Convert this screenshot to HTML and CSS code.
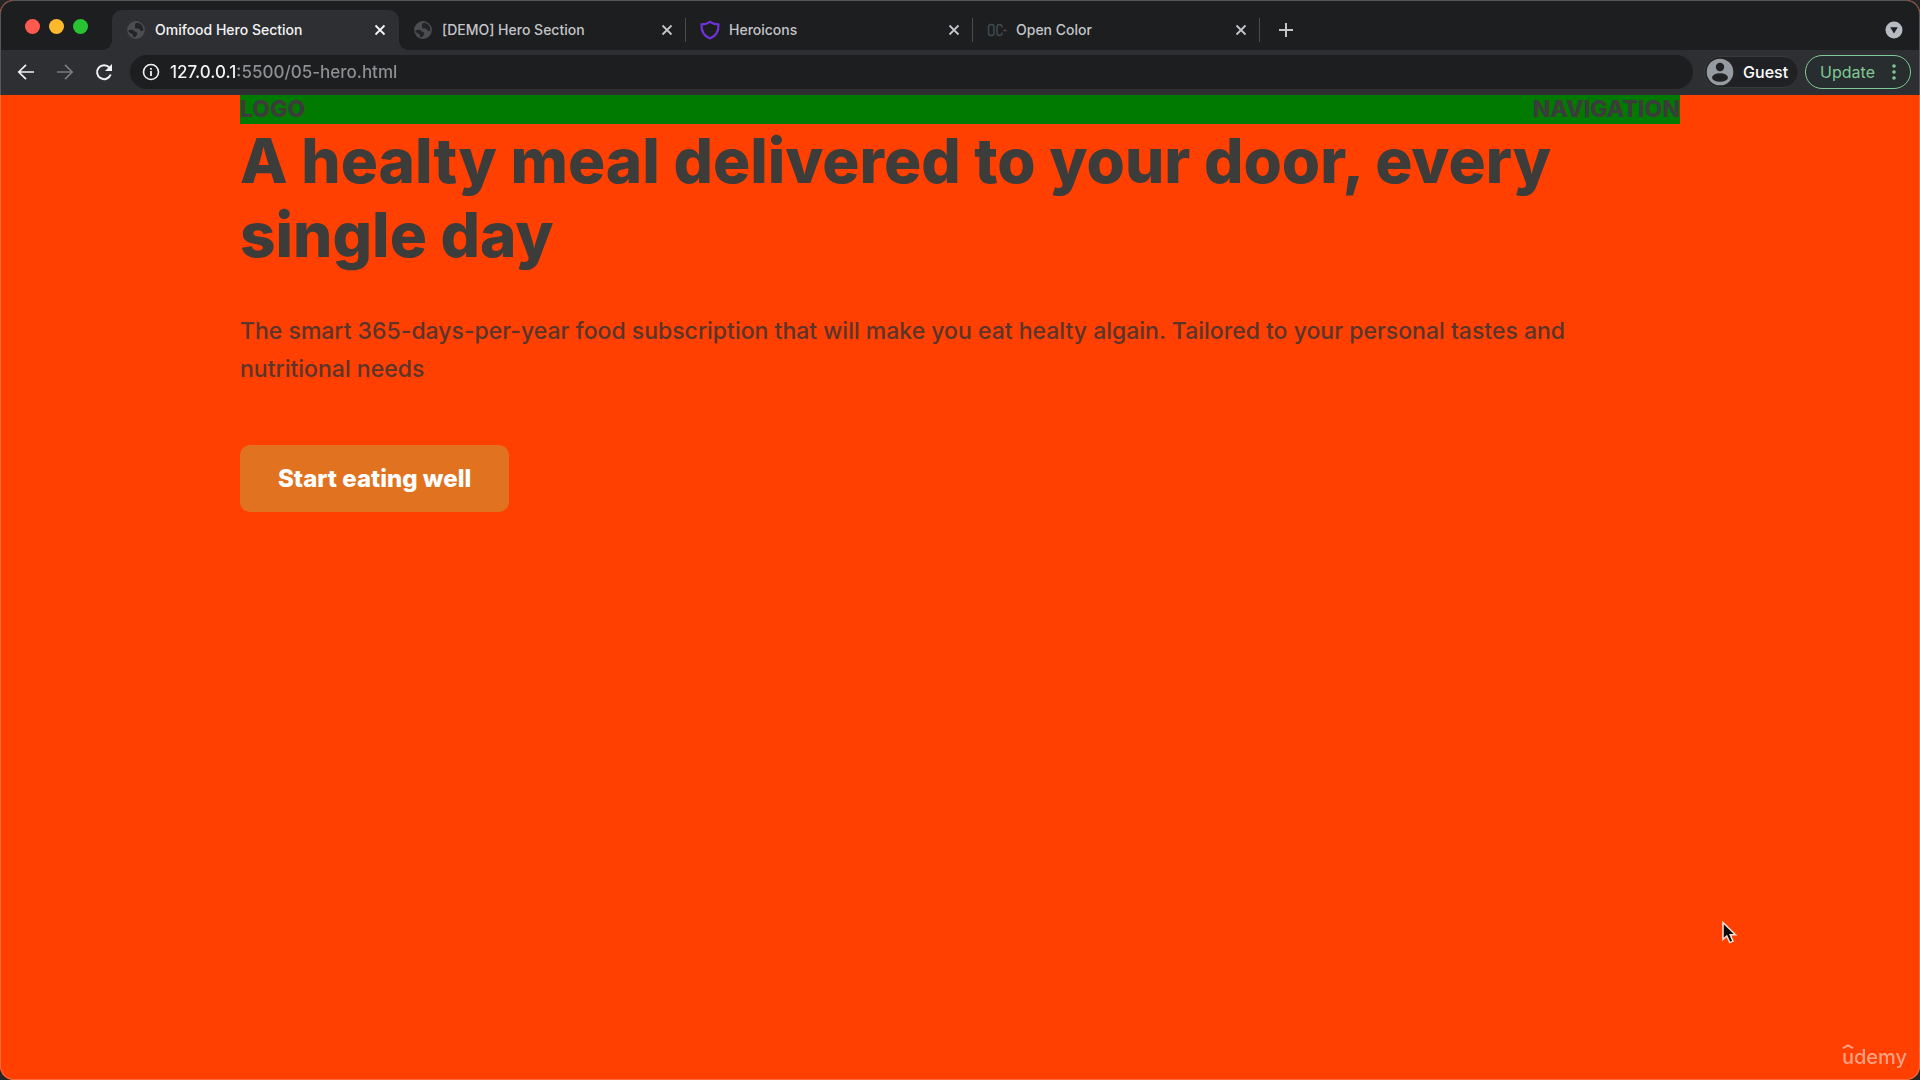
FILE: index.html
```html
<!DOCTYPE html>
<html lang="en">
<head>
<meta charset="utf-8">
<meta name="viewport" content="width=device-width, initial-scale=1">
<title>Omifood Hero Section</title>
<link rel="stylesheet" href="styles.css">
</head>
<body>
<svg class="sprite" aria-hidden="true">
  <symbol id="globe" viewBox="0 0 18 18">
    <circle cx="9" cy="9" r="8" fill="#4b4d50"/>
    <path d="M2 9.500C4 8.500 6.500 8.500 7.500 10S10.500 10.500 10 12.500 8.500 15.500 7 15.300 6.800 13 5.500 12.500 2.500 11.500 2 9.500ZM9 2.600C7.500 4 8.500 5.200 8 6.200S10 7.800 11.300 7.600 12.500 10 14 10 15.500 9 15.600 8.500A6.700 6.700 0 0 0 11.300 2.800Z" fill="#232427"/>
  </symbol>
  <symbol id="cross" viewBox="0 0 12 12">
    <path d="M1.500 1.500 10.500 10.500M10.500 1.500 1.500 10.500" fill="none" stroke="currentColor" stroke-width="1.800"/>
  </symbol>
</svg>
<div class="window">
  <header class="chrome">
    <div class="tab-strip">
      <div class="lights">
        <button class="light light-close" aria-label="Close window"></button>
        <button class="light light-min" aria-label="Minimise window"></button>
        <button class="light light-max" aria-label="Zoom window"></button>
      </div>
      <div class="tabs">
        <div class="tab tab-active">
          <svg class="tab-icon"><use href="#globe"/></svg>
          <span class="tab-title">Omifood Hero Section</span>
          <button class="tab-close" aria-label="Close tab"><svg class="cross"><use href="#cross"/></svg></button>
        </div>
        <div class="tab tab-divided">
          <svg class="tab-icon"><use href="#globe"/></svg>
          <span class="tab-title">[DEMO] Hero Section</span>
          <button class="tab-close" aria-label="Close tab"><svg class="cross"><use href="#cross"/></svg></button>
        </div>
        <div class="tab tab-divided">
          <svg class="tab-icon" viewBox="0 0 20 20"><path d="M10 1.800C7.600 3.500 4.700 4.300 1.500 4.300 1.300 10.500 3.500 16 10 18.500 16.500 16 18.700 10.500 18.500 4.300 15.300 4.300 12.400 3.500 10 1.800Z" fill="none" stroke="#6f33dc" stroke-width="2.200" stroke-linejoin="round"/></svg>
          <span class="tab-title">Heroicons</span>
          <button class="tab-close" aria-label="Close tab"><svg class="cross"><use href="#cross"/></svg></button>
        </div>
        <div class="tab tab-divided">
          <svg class="tab-icon" viewBox="0 0 20 20"><g fill="none" stroke-width="1.500"><rect x="1.500" y="4.500" width="5.500" height="11" rx="2.500" stroke="#3d4a50"/><path d="M15 7.500V7A2.500 2.500 0 0 0 10 7V13A2.500 2.500 0 0 0 15 13V12.500" stroke="#3d4a50"/><path d="M16.500 10.500H19.500" stroke="#5c4b45"/></g></svg>
          <span class="tab-title">Open Color</span>
          <button class="tab-close" aria-label="Close tab"><svg class="cross"><use href="#cross"/></svg></button>
        </div>
      </div>
      <button class="new-tab" aria-label="New tab"><svg viewBox="0 0 16 16" width="16" height="16"><path d="M8 1V15M1 8H15" stroke="currentColor" stroke-width="2"/></svg></button>
      <button class="tab-search" aria-label="Search tabs"><svg viewBox="0 0 18 18" width="18" height="18"><circle cx="9" cy="9" r="8.500" fill="#b9bbc3"/><path d="M5.200 6.200H12.800L9 12.400Z" fill="#1d1e20"/></svg></button>
    </div>
    <div class="toolbar">
      <div class="nav-buttons">
        <button class="nav-button" aria-label="Back"><svg viewBox="0 0 18 18" width="18" height="18"><path d="M17 9H2M9 1.800 1.800 9 9 16.200" fill="none" stroke="#f1f2f4" stroke-width="1.700"/></svg></button>
        <button class="nav-button" aria-label="Forward"><svg viewBox="0 0 18 18" width="18" height="18"><path d="M1 9H16M9 1.800 16.200 9 9 16.200" fill="none" stroke="#797b7f" stroke-width="1.700"/></svg></button>
        <button class="nav-button" aria-label="Reload"><svg viewBox="0 0 18 18" width="18" height="18"><path d="M15.700 11.500A7 7 0 1 1 14.500 4.700" fill="none" stroke="#f1f2f4" stroke-width="2"/><path d="M17 1V8H10Z" fill="#f1f2f4"/></svg></button>
      </div>
      <form class="address">
        <svg class="info" viewBox="0 0 18 18"><circle cx="9" cy="9" r="7.500" fill="none" stroke="#f1f2f4" stroke-width="1.600"/><path d="M9 8V13M9 5V6.800" stroke="#f1f2f4" stroke-width="1.800"/></svg>
        <input class="url" type="text" aria-label="Address" value="127.0.0.1:5500/05-hero.html">
      </form>
      <button class="guest">
        <svg viewBox="0 0 28 28" width="28" height="28"><circle cx="14" cy="14" r="13.300" fill="#969ba1"/><circle cx="14" cy="9" r="4.200" fill="#202124"/><ellipse cx="14" cy="19.500" rx="8" ry="4.300" fill="#202124"/></svg>
        <span>Guest</span>
      </button>
      <button class="update">
        <span>Update</span>
        <svg viewBox="0 0 4 16" width="4" height="16"><g fill="#80c995"><circle cx="2" cy="2" r="1.800"/><circle cx="2" cy="8" r="1.800"/><circle cx="2" cy="14" r="1.800"/></g></svg>
      </button>
    </div>
  </header>
  <main class="page">
    <div class="container site-header">
      <div>LOGO</div>
      <div>NAVIGATION</div>
    </div>
    <section class="container hero">
      <h1 class="hero-title">A healty meal delivered to your door, every single day</h1>
      <p class="hero-text">The smart 365-days-per-year food subscription that will make you eat healty algain. Tailored to your personal tastes and nutritional needs</p>
      <a class="cta" href="#">Start eating well</a>
    </section>
  </main>
</div>
<svg class="cursor" viewBox="0 0 16 24" aria-hidden="true"><path d="M1 1.500V18.500L4.800 15 7.800 21.600 11 20.200 8.200 13.800H13.500Z" fill="#0b0b0b" stroke="#ffe3da" stroke-width="1.500"/></svg>
<div class="watermark"><svg class="watermark-hat" viewBox="0 0 12 5" aria-hidden="true"><path d="M1 4.200 6 1.300 11 4.200" fill="none" stroke="currentColor" stroke-width="2"/></svg>udemy</div>
</body>
</html>
```
FILE: styles.css
```css
* {
  box-sizing: border-box;
  margin: 0;
  padding: 0;
}

body {
  background: #262626;
  font-family: Inter, "Liberation Sans", sans-serif;
}

button {
  border: 0;
  background: none;
  color: inherit;
  font: inherit;
}

svg {
  display: block;
  flex: none;
}

.sprite {
  position: absolute;
  width: 0;
  height: 0;
}

.window {
  display: flex;
  flex-direction: column;
  min-height: 100vh;
  overflow: hidden;
  border-radius: 14px;
  background: #ff4000;
  box-shadow: inset 0 0 0 1px #ff6a3c;
}

/* Browser chrome */
.chrome {
  border: 1px solid #55585a;
  border-bottom: 0;
  border-radius: 14px 14px 0 0;
  background: #1d1e20;
}

.tab-strip {
  display: flex;
  height: 49px;
  padding: 9px 16px 0 24px;
}

.lights {
  display: flex;
  align-items: center;
  gap: 9px;
  height: 32px;
  width: 87px;
}

.light {
  width: 15px;
  height: 15px;
  border-radius: 50%;
}

.light-close { background: #ff5a4f; }
.light-min { background: #fdb92c; }
.light-max { background: #28c232; }

.tabs {
  display: flex;
  flex: 0 1 1148px;
  min-width: 0;
}

.tab {
  display: flex;
  flex: 1;
  align-items: center;
  min-width: 0;
  padding: 0 13px 1px 14px;
  color: #c3c5c9;
  font-size: 14px;
  font-weight: 500;
}

.tab-active {
  position: relative;
  border-radius: 10px 10px 0 0;
  background: #2e2f33;
  color: #f4f5f6;
}

.tab-active::before,
.tab-active::after {
  content: "";
  position: absolute;
  bottom: 0;
  width: 10px;
  height: 10px;
}

.tab-active::before {
  right: 100%;
  background: radial-gradient(circle at 0 0, transparent 10px, #2e2f33 10px);
}

.tab-active::after {
  left: 100%;
  background: radial-gradient(circle at 100% 0, transparent 10px, #2e2f33 10px);
}

.tab-divided {
  background: linear-gradient(#4b4c50, #4b4c50) right center / 1px 24px no-repeat;
}

.tab-icon {
  width: 20px;
  height: 20px;
  margin-right: 9px;
}

.tab-title {
  flex: 1;
  overflow: hidden;
  white-space: nowrap;
}

.cross {
  width: 12px;
  height: 12px;
}

.new-tab {
  padding: 0 18px;
  color: #c3c5c9;
}

.tab-search {
  margin-left: auto;
}

.toolbar {
  display: flex;
  align-items: center;
  height: 45px;
  padding: 0 8px 1px 16px;
  background: #2e2f33;
}

.nav-buttons {
  display: flex;
  gap: 21px;
  width: 113px;
}

.address {
  display: flex;
  flex: 1;
  align-items: center;
  gap: 10px;
  height: 34px;
  padding: 0 12px;
  border-radius: 17px;
  background: #1d1e20;
}

.info {
  width: 18px;
  height: 18px;
}

/* The host is white, the rest of the URL is dimmed. */
.url {
  flex: 1;
  min-width: 0;
  border: 0;
  outline: 0;
  background: linear-gradient(to right, #f4f5f6 68px, #8f9194 68px);
  background-clip: text;
  -webkit-background-clip: text;
  color: #8f9194;
  -webkit-text-fill-color: transparent;
  font: 500 17px/24px Inter, "Liberation Sans", sans-serif;
}

.guest {
  display: flex;
  align-items: center;
  gap: 9px;
  height: 32px;
  margin: 0 6px 0 11px;
  padding: 0 10px 0 1px;
  border: 1px solid #38393d;
  border-radius: 16px;
  background: #202124;
  color: #fff;
  font-size: 16px;
  font-weight: 500;
}

.update {
  display: flex;
  align-items: center;
  gap: 17px;
  height: 34px;
  padding: 0 14px;
  border: 1px solid #80c995;
  border-radius: 17px;
  background: #282d2f;
  color: #80c995;
  font-size: 16px;
}

/* Page */
.page {
  flex: 1;
  color: #3c3c3a;
}

.container {
  width: 75%;
  margin: 0 auto;
}

.site-header {
  display: flex;
  justify-content: space-between;
  background: #007a00;
  font-size: 23px;
  font-weight: 800;
  line-height: 29px;
}

.hero-title {
  margin-bottom: 40px;
  font-size: 62px;
  font-weight: 800;
  line-height: 74px;
}

.hero-text {
  margin-bottom: 57px;
  color: #59352c;
  font-size: 23px;
  font-weight: 500;
  line-height: 38px;
}

.cta {
  display: inline-block;
  padding: 14px 38px;
  border-radius: 10px;
  background: #e17320;
  color: #fff;
  font-size: 24px;
  font-weight: 800;
  line-height: 39px;
  text-decoration: none;
}

.cursor {
  position: fixed;
  right: 182px;
  bottom: 135px;
  width: 16px;
  height: 24px;
}

.watermark {
  position: fixed;
  right: 13px;
  bottom: 10px;
  color: #ffa184;
  font: 500 20px/26px Inter, sans-serif;
}

.watermark-hat {
  position: absolute;
  top: 0;
  left: 0;
  width: 12px;
  height: 5px;
}
```
